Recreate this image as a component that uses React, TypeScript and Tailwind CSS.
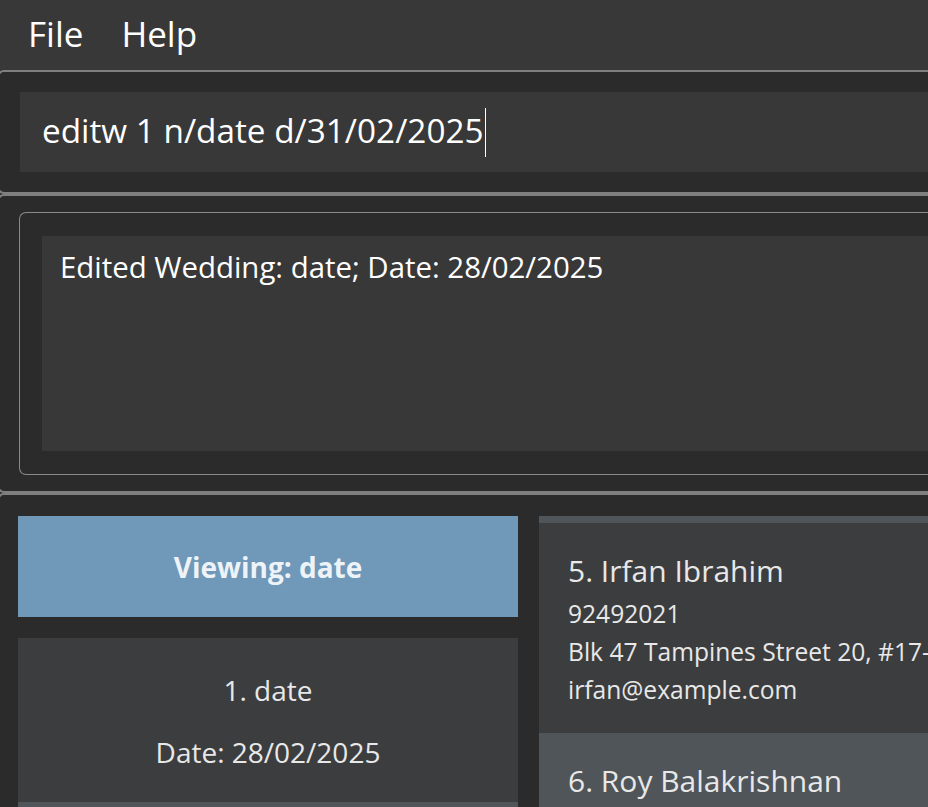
import React from "react";

const font = { fontFamily: '"Open Sans", "Noto Sans", sans-serif' };

export default function App() {
  return (
    <div
      className="w-[928px] h-[807px] overflow-hidden bg-[#2b2b2b] flex flex-col"
      style={font}
    >
      {/* Menu bar */}
      <div className="h-[70px] shrink-0 bg-[#383838] flex items-center gap-[38px] pl-[28px] pb-[2px] text-[35px] text-white">
        <span>File</span>
        <span>Help</span>
      </div>

      {/* Command box */}
      <div className="shrink-0 -ml-[3px] border-t-2 border-b-2 border-l-2 border-[#7f7f7f] rounded-l-[7px] pl-[21px] py-[20px]">
        <div className="h-[80px] bg-[#383838] flex items-center pl-[22px] text-[33.3px] text-white">
          <span className="-mt-[3px]">editw 1 n/date d/31/02/2025</span>
          <span className="inline-block w-[1.5px] h-[49px] bg-white ml-[1px]" />
        </div>
      </div>

      {/* Result display */}
      <div className="shrink-0 -ml-[3px] border-t-2 border-b-2 border-l-2 border-[#7f7f7f] rounded-l-[7px] pl-[20px] py-[16px]">
        <div className="border-[1.5px] border-r-0 border-[#8a8a8a] rounded-l-[7px] pl-[22px] py-[23px]">
          <div className="h-[215px] bg-[#383838] pl-[18px] pt-[12px] text-[29.4px] text-white leading-[38px]">
            Edited Wedding: date; Date: 28/02/2025
          </div>
        </div>
      </div>

      {/* Lists */}
      <div className="-ml-[3px] border-t-2 border-l-2 border-[#7f7f7f] rounded-tl-[7px] pl-[19px] pt-[21px] flex gap-[21px] flex-1 min-h-0">
        <div className="w-[500px] shrink-0 flex flex-col">
          <div className="h-[101px] shrink-0 bg-[#6f98b9] flex items-center justify-center text-[28px] font-bold text-[#eef3f8]">
            Viewing: date
          </div>
          <div className="mt-[21px] h-[164px] shrink-0 bg-[#3c3d3f] flex flex-col items-center text-[28px] text-[#e8e8e8]">
            <div className="mt-[35px] leading-[34px]">1. date</div>
            <div className="mt-[28px] leading-[34px]">Date: 28/02/2025</div>
          </div>
          <div className="h-[40px] shrink-0 bg-[#4f5558]" />
        </div>
        <div className="flex-1 flex flex-col min-w-0">
          <div className="h-[7px] shrink-0 bg-[#4f5558]" />
          <div className="h-[210px] shrink-0 bg-[#3c3d3f] pl-[29px] pt-[28px] text-[#e8e8e8] whitespace-nowrap overflow-hidden">
            <div className="text-[30px] leading-[40px]">5. Irfan Ibrahim</div>
            <div className="mt-[4px] text-[24.6px] leading-[38px]">92492021</div>
            <div className="text-[24.6px] leading-[38px]">Blk 47 Tampines Street 20, #17-35</div>
            <div className="text-[24.6px] leading-[38px]">irfan@example.com</div>
          </div>
          <div className="flex-1 bg-[#4f5558] pl-[29px] pt-[28px] text-[#e8e8e8]">
            <div className="text-[30px] leading-[40px]">6. Roy Balakrishnan</div>
          </div>
        </div>
      </div>
    </div>
  );
}
